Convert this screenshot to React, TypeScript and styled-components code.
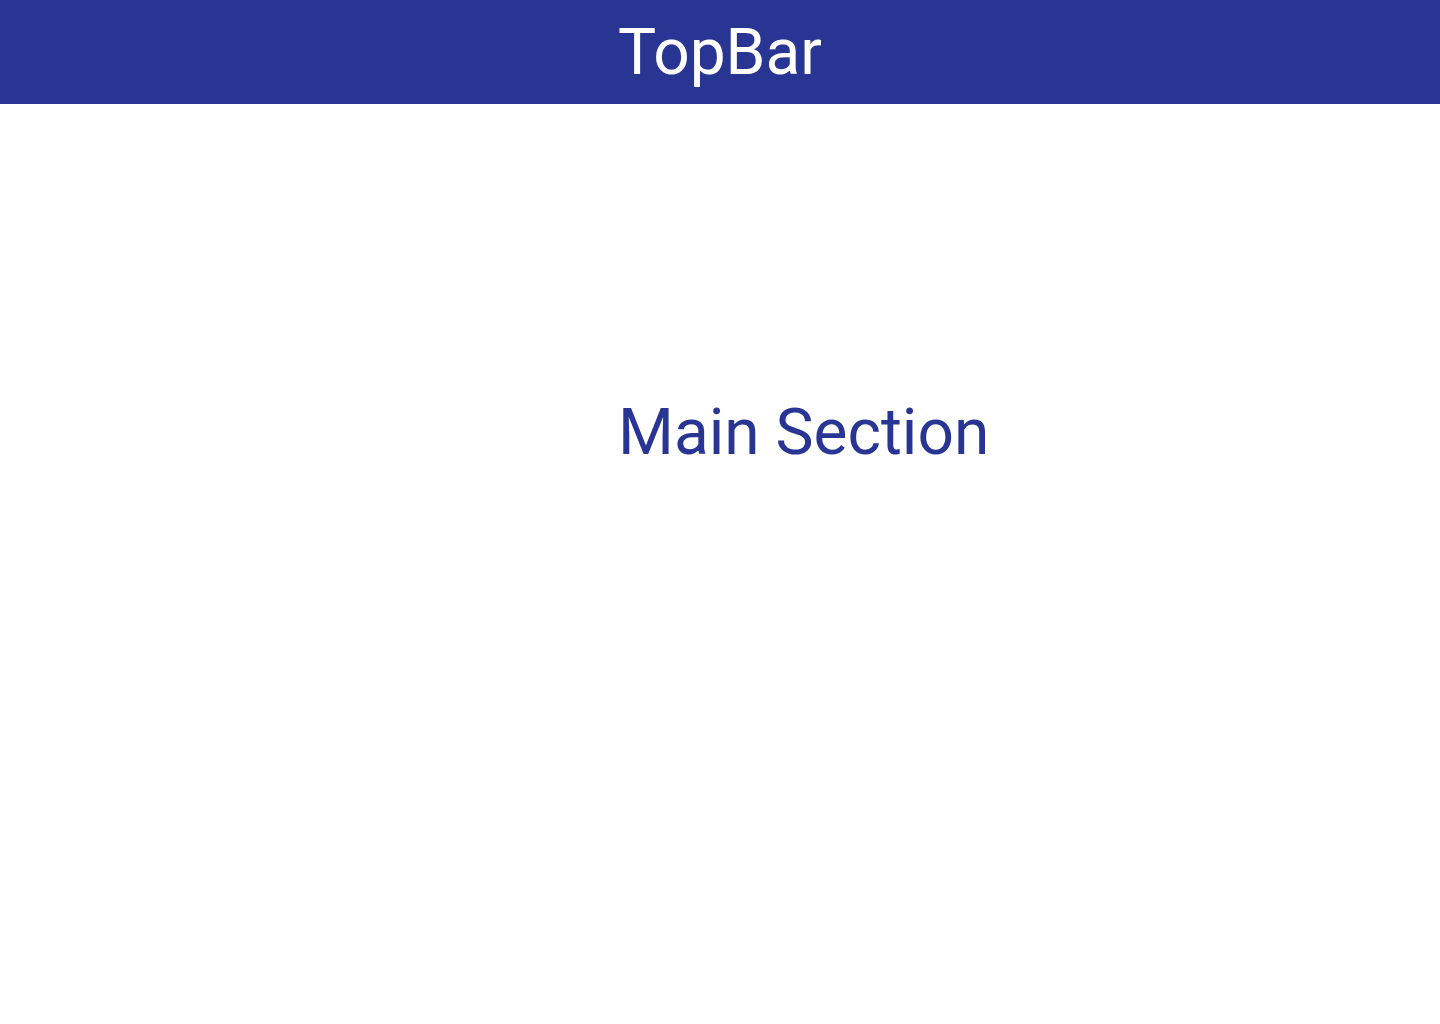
import React from "react";
import styled, { createGlobalStyle } from "styled-components";

const GlobalStyle = createGlobalStyle`
  html, body {
    margin: 0;
    padding: 0;
    background: #ffffff;
    font-family: Roboto, "Liberation Sans", sans-serif;
  }
`;

const Page = styled.div`
  display: flex;
  flex-direction: column;
  width: 1440px;
  min-height: 1024px;
`;

const TopBar = styled.header`
  display: flex;
  align-items: center;
  justify-content: center;
  height: 104px;
  background: #283593;
  color: #ffffff;
  font-size: 64px;
  font-weight: 400;
`;

const Main = styled.main`
  display: flex;
  padding: 291px 0 0 618px;
`;

const MainTitle = styled.h1`
  margin: 0;
  font-size: 64px;
  font-weight: 400;
  line-height: normal;
  color: #283593;
`;

export default function App() {
  return (
    <Page>
      <GlobalStyle />
      <TopBar>TopBar</TopBar>
      <Main>
        <MainTitle>Main Section</MainTitle>
      </Main>
    </Page>
  );
}
